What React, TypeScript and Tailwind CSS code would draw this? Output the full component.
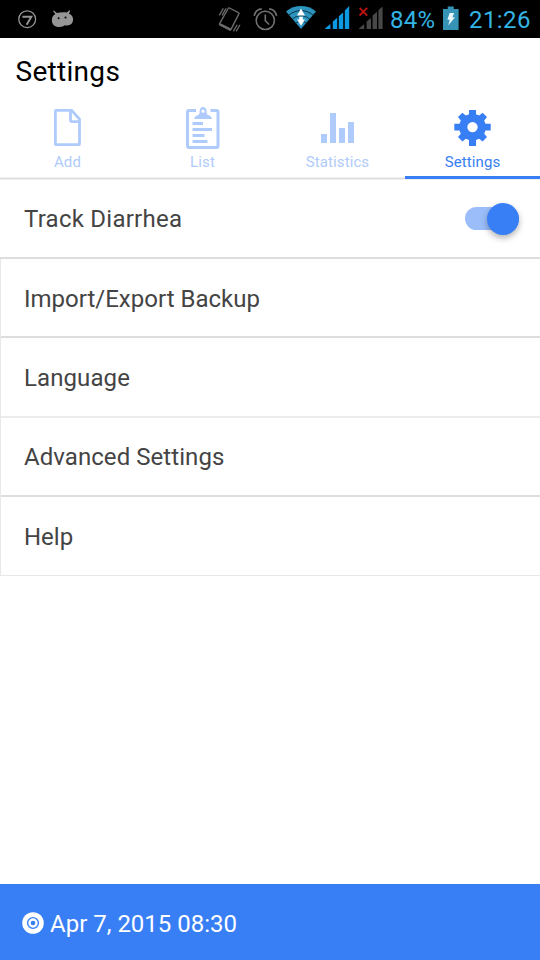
import type { ReactNode } from 'react'
import clsx from 'clsx'

function SevenIcon() {
  return (
    <svg className="h-[38px] w-5" viewBox="0 0 20 38" fill="none" stroke="#969696">
      <circle cx="10.2" cy="19.2" r="8.4" strokeWidth="1.3" />
      <path d="M5.4 16.7h9l-4.8 8" strokeWidth="1.9" />
    </svg>
  )
}

function DroidIcon() {
  return (
    <svg className="h-[38px] w-6" viewBox="0 0 24 38" fill="#969696">
      <path d="M4.3 14.1 2 11l.9-.6 3 2.7c3-1 7-1.2 10-.6l2.3-2.3.9.5-1 3c2.8 1.2 4.2 3.6 4 6.2-.2 3.3-2.6 5.2-5.8 5.6-1.2 0-2-.3-2.6-.3-1.2.9-3 1.7-5.2 1.7-3.8.1-6.8-1.8-7.5-5-.5-3.2.3-6.2 3.3-7.8Z" />
      <circle cx="7.6" cy="18.3" r="1" fill="#000" />
      <circle cx="14.5" cy="17.5" r="1" fill="#000" />
    </svg>
  )
}

function VibrateIcon() {
  return (
    <svg className="h-[38px] w-6" viewBox="0 0 24 38" fill="none" stroke="#6a6a6a" strokeWidth="1.4">
      <path d="m11.4 8 9.1 4.7q.8.4.4 1.2L13 29.4q-.4.8-1.2.4L2 24.9q-.8-.4-.4-1.2l8.6-15.2q.4-.8 1.2-.5Z" />
      <path d="m2 24.4 10.6 5.2" strokeWidth="2.4" />
      <path d="m1.3 15.4 4-7M4.1 15.4l4-7M15.4 31.4l3.8-6.6M18.2 31.4l3.8-6.6" strokeWidth="1.3" />
    </svg>
  )
}

function AlarmIcon() {
  return (
    <svg className="h-[38px] w-[26px]" viewBox="0 0 26 38" fill="none" stroke="#717171" strokeWidth="1.6">
      <circle cx="12.3" cy="20.4" r="9.1" />
      <path d="M12.3 14.5v6.2l3.8 3.8" strokeWidth="1.6" />
      <path d="M1.2 15.8C2 12.2 5 9.3 8.7 8.9M23.6 15.8C22.8 12.2 19.8 9.3 16.1 8.9" />
    </svg>
  )
}

function WifiIcon() {
  return (
    <svg className="h-[38px] w-8" viewBox="0 0 32 38">
      <path d="M1 11.4C9.8 4.2 22.2 4.2 31 11.4L16 29Z" fill="#2b93bd" />
      <path
        d="M4 15c7.2-5.8 16.8-5.8 24 0M7.4 19c5.2-4.4 12-4.4 17.2 0M10.8 23.2c3.2-2.8 7.2-2.8 10.4 0"
        fill="none"
        stroke="#0a3345"
        strokeWidth="1"
      />
      <path d="m16 8.6 4 6.9h-8ZM16 25.8l-4-6.2h2.2v-2.8h3.6v2.8H20Z" fill="#fff" />
    </svg>
  )
}

function SignalIcon() {
  return (
    <svg className="h-[38px] w-[25px]" viewBox="0 0 25 38" fill="#0c9ae3">
      <path d="M0 29v-.6L5.4 24v5ZM7.8 29v-7.6l4.4-3.7V29ZM13.8 29V16.2l4.4-3.8V29ZM19.8 29V10.4l4.4-4.4v23Z" />
    </svg>
  )
}

function NoSignalIcon() {
  return (
    <svg className="h-[38px] w-[25px]" viewBox="0 0 25 38" fill="#484848">
      <path d="M0 29v-.6L5.2 24v5ZM7.6 29v-7.6l4.4-3.5V29ZM13.6 29V15.5l4.4-3.7V29ZM19.4 29V10.2L23.6 6.6V29Z" />
      <path d="m.6 7.8 7.6 7.8M8.2 7.8l-7.6 7.8" stroke="#c01010" strokeWidth="1.9" />
    </svg>
  )
}

function BatteryIcon() {
  return (
    <svg className="h-[38px] w-4" viewBox="0 0 16 38">
      <path d="M4.7 9V6.6h6V9H15.6v21H0V9Z" fill="#3593b5" />
      <path d="M6.6 13h4.6l-1.8 4.3H12L5.2 25.6l1.5-5.8H4.4Z" fill="#e8f6fb" />
    </svg>
  )
}

function AddIcon() {
  return (
    <svg className="h-[46px] w-9" viewBox="0 0 36 46" fill="none" stroke="currentColor" strokeWidth="2.8">
      <path d="M7.4 5.4h15.2l7.9 8.6v25q0 .6-.6.6h-23q-.5 0-.5-.6V6q0-.6 1-.6Z" />
      <path d="M21.5 5v10q0 1.6 1.6 1.6h8" />
    </svg>
  )
}

function ListIcon() {
  return (
    <svg className="h-[46px] w-9" viewBox="0 0 36 46" fill="none" stroke="currentColor" strokeWidth="3">
      <path d="M12 5.5H5.2Q3.5 5.5 3.5 7.2v33.6q0 1.7 1.7 1.7h27.1q1.7 0 1.7-1.7V7.2q0-1.7-1.7-1.7H26.5" />
      <path
        fillRule="evenodd"
        d="M10.2 14q.4-3 3.5-3.8 1.6-.4 1.9-2.2V6q.4-3.9 3.5-3.9T22.6 6v2q.3 1.8 1.9 2.2 3.1.8 3.5 3.8ZM19.1 4.6a1.6 1.6 0 1 0 0 3.2 1.6 1.6 0 0 0 0-3.2Z"
        fill="currentColor"
        stroke="none"
      />
      <path d="M8.5 18.5H19M8.5 24.5H28M8.5 30.5h12M8.5 36.5h15" />
    </svg>
  )
}

function StatisticsIcon() {
  return (
    <svg className="h-[46px] w-9" viewBox="0 0 36 46" fill="currentColor">
      <path d="M2 29h6v9H2ZM11 8h6v30h-6ZM20 23h6v15h-6ZM29 17h6v21h-6Z" />
    </svg>
  )
}

function GearIcon() {
  return (
    <svg className="h-[46px] w-9 overflow-visible" viewBox="0 0 36 46" fill="currentColor">
      <path
        fillRule="evenodd"
        d="M15 6h7v4.2l3.2 1.3 3.4-2.8 4.4 4.4-2.8 3.4 1.3 3.3h5.2v6.6h-5.2l-1.3 3.3 2.8 3.4-4.4 4.4-3.4-2.8-3.2 1.3V42h-7v-6l-3.2-1.3-3.4 2.8L4 33.1l2.8-3.4-1.3-3.3H.3v-6.6h5.2l1.3-3.3L4 13.1l4.4-4.4 3.4 2.8 3.2-1.3ZM18.5 17.9a5.2 5.2 0 1 0 0 10.4 5.2 5.2 0 0 0 0-10.4Z"
        transform="translate(0 -1)"
      />
    </svg>
  )
}

function RecordIcon() {
  return (
    <svg className="h-[22px] w-[22px]" viewBox="0 0 22 22" fill="none">
      <circle cx="11" cy="11" r="10.8" fill="#fff" />
      <circle cx="11" cy="11" r="5.4" stroke="#387ef5" strokeWidth="1.4" />
      <circle cx="11" cy="11" r="2.3" fill="#387ef5" />
    </svg>
  )
}

interface TabProps {
  label: string
  icon: ReactNode
  active?: boolean
}

function Tab({ label, icon, active }: TabProps) {
  return (
    <button
      className={clsx(
        'flex h-[75px] flex-1 flex-col items-center pt-px',
        active ? 'border-b-3 border-[#387ef5] text-[#387ef5]' : 'text-[#afcbfb]',
      )}
    >
      <span className="pr-px">{icon}</span>
      <span className="mt-[2px] text-[15px] leading-[18px] tracking-[0.1px]">{label}</span>
    </button>
  )
}

const items = [
  { label: 'Import/Export Backup', className: 'h-[79px] border-b-2 border-[#ddd] pt-[2px]' },
  { label: 'Language', className: 'h-20 border-b-2 border-[#ececec] pt-[2px] tracking-[0.1px]' },
  { label: 'Advanced Settings', className: 'h-[79px] border-b-2 border-[#ddd] tracking-[0.06px]' },
  { label: 'Help', className: 'h-[79px] border-b border-[#e8e8e8] pt-[2px]' },
]

export default function App() {
  return (
    <div className="flex h-[960px] w-[540px] flex-col overflow-hidden bg-white font-['Roboto',sans-serif]">
      {/* Status bar */}
      <div className="flex h-[38px] items-center bg-black text-2xl text-[#33b5e5]">
        <div className="ml-[17px] flex gap-[14px]">
          <SevenIcon />
          <DroidIcon />
        </div>
        <div className="ml-[143px] flex">
          <VibrateIcon />
          <span className="w-[11px]" />
          <AlarmIcon />
          <span className="w-[6px]" />
          <WifiIcon />
          <span className="w-2" />
          <SignalIcon />
          <span className="w-[9px]" />
          <NoSignalIcon />
        </div>
        <span className="ml-[6px] w-[46px] pt-[2px] whitespace-nowrap tracking-[0.2px]">84%</span>
        <span className="ml-[7px]">
          <BatteryIcon />
        </span>
        <span className="ml-[10px] pt-[2px] whitespace-nowrap tracking-[0.4px]">21:26</span>
      </div>

      {/* Title and tabs */}
      <header>
        <h1 className="h-[66px] pl-[15.5px] text-[28px] leading-[68px] tracking-[0.3px] text-black">Settings</h1>
        <nav className="flex h-[76px] bg-[linear-gradient(to_top,#efefef_1px,#dddddd_1px,#dddddd_2px,#efefef_2px,#efefef_3px,transparent_3px)]">
          <Tab label="Add" icon={<AddIcon />} />
          <Tab label="List" icon={<ListIcon />} />
          <Tab label="Statistics" icon={<StatisticsIcon />} />
          <Tab label="Settings" icon={<GearIcon />} active />
        </nav>
      </header>

      {/* Settings list */}
      <main className="flex-1 text-2xl text-[#444]">
        <div className="flex h-[79px] items-center justify-between border-b-2 border-[#ddd] pr-[21px] pl-6">
          <span className="tracking-[0.25px]">Track Diarrhea</span>
          <span className="flex h-[23px] w-[54px] items-center justify-end rounded-full bg-[#9bbefa]">
            <span className="h-8 w-8 shrink-0 rounded-full bg-[#387ef5] shadow-[0_3px_6px_rgba(0,0,0,0.3)]" />
          </span>
        </div>
        <div className="border-l border-[#e8e8e8]">
          {items.map((item) => (
            <div key={item.label} className={clsx('flex items-center pl-[23px]', item.className)}>
              {item.label}
            </div>
          ))}
        </div>
      </main>

      <footer className="flex h-[76px] items-center gap-[6px] bg-[#387ef5] pt-[2px] pl-[22px] text-2xl text-white">
        <RecordIcon />
        <span className="pt-[2px]">Apr 7, 2015 08:30</span>
      </footer>
    </div>
  )
}
